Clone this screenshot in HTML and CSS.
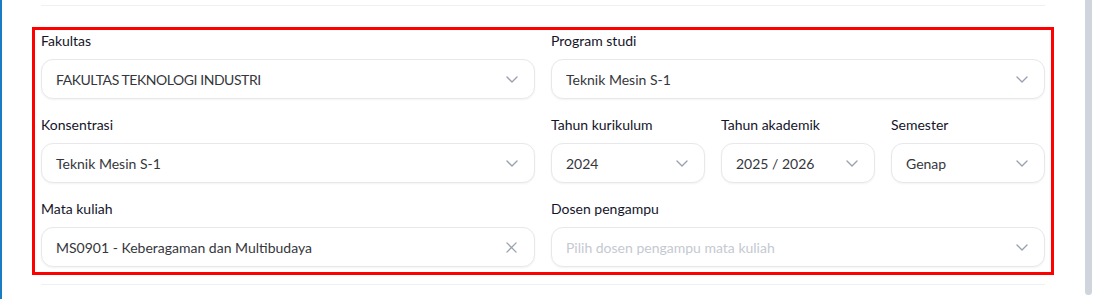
FILE: index.html
```html
<!DOCTYPE html>
<html lang="id">
<head>
<meta charset="utf-8">
<title>Form Mata Kuliah</title>
<link rel="stylesheet" href="styles.css">
</head>
<body>
<div class="page">
  <main class="main">
    <div class="content">
      <div class="rule"></div>
      <form class="form">
        <div class="field">
          <label class="label">Fakultas</label>
          <div class="select">
            <span class="value caps">FAKULTAS TEKNOLOGI INDUSTRI</span>
            <svg class="chev" width="12" height="7" viewBox="0 0 12 7"><path d="M1 1 L6 6 L11 1" fill="none" stroke="#9aa1ae" stroke-width="1.4" stroke-linecap="round" stroke-linejoin="round"/></svg>
          </div>
        </div>
        <div class="field">
          <label class="label">Program studi</label>
          <div class="select">
            <span class="value">Teknik Mesin S-1</span>
            <svg class="chev" width="12" height="7" viewBox="0 0 12 7"><path d="M1 1 L6 6 L11 1" fill="none" stroke="#9aa1ae" stroke-width="1.4" stroke-linecap="round" stroke-linejoin="round"/></svg>
          </div>
        </div>
        <div class="field">
          <label class="label">Konsentrasi</label>
          <div class="select">
            <span class="value">Teknik Mesin S-1</span>
            <svg class="chev" width="12" height="7" viewBox="0 0 12 7"><path d="M1 1 L6 6 L11 1" fill="none" stroke="#9aa1ae" stroke-width="1.4" stroke-linecap="round" stroke-linejoin="round"/></svg>
          </div>
        </div>
        <div class="triple">
          <div class="field">
            <label class="label">Tahun kurikulum</label>
            <div class="select">
              <span class="value">2024</span>
              <svg class="chev" width="12" height="7" viewBox="0 0 12 7"><path d="M1 1 L6 6 L11 1" fill="none" stroke="#9aa1ae" stroke-width="1.4" stroke-linecap="round" stroke-linejoin="round"/></svg>
            </div>
          </div>
          <div class="field">
            <label class="label">Tahun akademik</label>
            <div class="select">
              <span class="value">2025 / 2026</span>
              <svg class="chev" width="12" height="7" viewBox="0 0 12 7"><path d="M1 1 L6 6 L11 1" fill="none" stroke="#9aa1ae" stroke-width="1.4" stroke-linecap="round" stroke-linejoin="round"/></svg>
            </div>
          </div>
          <div class="field">
            <label class="label">Semester</label>
            <div class="select">
              <span class="value">Genap</span>
              <svg class="chev" width="12" height="7" viewBox="0 0 12 7"><path d="M1 1 L6 6 L11 1" fill="none" stroke="#9aa1ae" stroke-width="1.4" stroke-linecap="round" stroke-linejoin="round"/></svg>
            </div>
          </div>
        </div>
        <div class="field">
          <label class="label">Mata kuliah</label>
          <div class="select">
            <span class="value">MS0901 - Keberagaman dan Multibudaya</span>
            <svg class="clear" width="12" height="12" viewBox="0 0 12 12"><path d="M1 1 L11 11 M11 1 L1 11" fill="none" stroke="#9aa1ae" stroke-width="1.4" stroke-linecap="round"/></svg>
          </div>
        </div>
        <div class="field">
          <label class="label">Dosen pengampu</label>
          <div class="select">
            <span class="value placeholder">Pilih dosen pengampu mata kuliah</span>
            <svg class="chev" width="12" height="7" viewBox="0 0 12 7"><path d="M1 1 L6 6 L11 1" fill="none" stroke="#9aa1ae" stroke-width="1.4" stroke-linecap="round" stroke-linejoin="round"/></svg>
          </div>
        </div>
      </form>
      <div class="rule rule-bottom"></div>
    </div>
  </main>
  <div class="scrolltrack"><div class="thumb"></div></div>
</div>
</body>
</html>
```

FILE: styles.css
```css
* { box-sizing: border-box; }
html, body { margin: 0; padding: 0; background: #fff; }
body {
  font-family: "Lato", "Noto Sans", sans-serif;
  color: #1b1b2a;
}
.page {
  display: flex;
  height: 299px;
  overflow: hidden;
}
.main {
  flex: 1;
  border-left: 2px solid #1b7dc1;
  padding-left: 39px;
}
.content {
  width: 1004px;
}
.rule {
  height: 1px;
  background: #eef0f3;
  margin-top: 5px;
}
.rule-bottom {
  margin-top: 9px;
}
.form {
  margin: 21px -9px 0;
  border: 3px solid #ff0000;
  padding: 1px 6px 5px;
  display: grid;
  grid-template-columns: 494px 494px;
  column-gap: 16px;
  row-gap: 16px;
}
.triple {
  display: grid;
  grid-template-columns: repeat(3, 1fr);
  column-gap: 16px;
}
.field {
  display: flex;
  flex-direction: column;
  gap: 8px;
  min-width: 0;
}
.label {
  font-size: 14px;
  line-height: 20px;
  color: #14142a;
}
.select {
  height: 40px;
  border: 1px solid #e7e8eb;
  border-radius: 12px;
  background: #fff;
  box-shadow: 0 1px 2px rgba(16, 24, 40, 0.05);
  display: flex;
  align-items: center;
  justify-content: space-between;
  padding: 0 16px 0 14px;
}
.value {
  font-size: 14px;
  color: #35373c;
  white-space: nowrap;
}
.caps {
  letter-spacing: -0.45px;
}
.placeholder {
  color: #c5c9d1;
}
.chev { flex: none; }
.clear { flex: none; width: 11px; height: 11px; margin-right: 1px; }
.scrolltrack {
  width: 10px;
  padding: 0 2px 0 0;
  display: flex;
  justify-content: flex-end;
}
.thumb {
  width: 7px;
  height: 295px;
  background: #d0d4dd;
  border-radius: 0 0 4px 4px;
  margin-right: 1px;
}
```
